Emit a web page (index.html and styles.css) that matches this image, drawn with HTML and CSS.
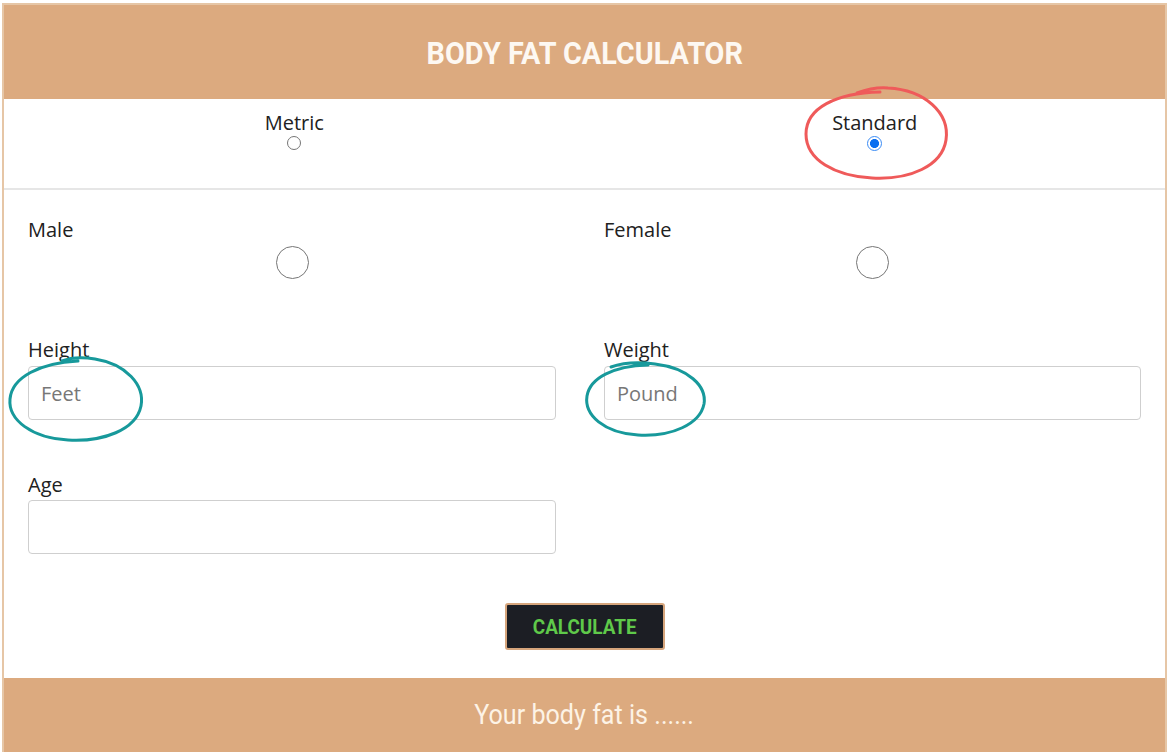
FILE: index.html
```html
<!DOCTYPE html>
<html lang="en">
<head>
<meta charset="utf-8">
<title>Body Fat Calculator</title>
<link rel="stylesheet" href="styles.css">
</head>
<body>
<div class="frame">
  <header class="header"><h1 class="title"><span>BODY FAT CALCULATOR</span></h1></header>

  <div class="units">
    <label class="unit">
      <span class="unit-label">Metric</span>
      <input type="radio" name="unit" class="radio-sm">
    </label>
    <label class="unit">
      <span class="unit-label">Standard</span>
      <input type="radio" name="unit" class="radio-sm" checked>
    </label>
  </div>

  <form class="form">
    <div class="field gender">
      <span class="label">Male</span>
      <input type="radio" name="sex" class="radio-lg">
    </div>
    <div class="field gender">
      <span class="label">Female</span>
      <input type="radio" name="sex" class="radio-lg">
    </div>

    <div class="field measure">
      <span class="label">Height</span>
      <input type="text" class="input" placeholder="Feet">
    </div>
    <div class="field measure">
      <span class="label">Weight</span>
      <input type="text" class="input" placeholder="Pound">
    </div>

    <div class="field age">
      <span class="label">Age</span>
      <input type="text" class="input">
    </div>

    <div class="actions">
      <button type="button" class="btn"><span>CALCULATE</span></button>
    </div>
  </form>

  <footer class="result"><span>Your body fat is ......</span></footer>

  <svg class="marks" width="1169" height="754" viewBox="0 0 1169 754" aria-hidden="true">
    <path class="mark-red" d="M857 93 C868 89 876 87 888 88 C925 90 950 113 946 140 C942 166 910 180 872 178 C835 176 806 160 806 134 C806 108 836 93 880 92"/>
    <path class="mark-teal" d="M62 361 C72 357 84 357 95 359 C126 364 145 385 141 406 C136 430 103 442 68 440 C32 438 8 420 10 399 C12 377 40 363 78 361"/>
    <path class="mark-teal" d="M611 367 C625 362 640 362 655 364 C688 368 707 386 704 404 C700 424 672 437 638 435 C604 433 584 415 587 396 C590 378 613 366 648 365"/>
  </svg>
</div>
</body>
</html>
```

FILE: styles.css
```css
* { box-sizing: border-box; }

html, body {
  margin: 0;
  padding: 0;
  background: #fff;
}

body {
  font-family: "Open Sans", "Liberation Sans", sans-serif;
  color: #212121;
}

.frame {
  position: relative;
  margin: 3px 2px 0 2px;
  border: 2px solid #e6c6a6;
  border-bottom: none;
  height: 749px;
  display: flex;
  flex-direction: column;
}

.header {
  background: #dcaa7f;
  height: 94px;
  display: flex;
  align-items: center;
  justify-content: center;
}

.title {
  margin: 0;
  font-family: Roboto, "Liberation Sans", sans-serif;
  font-weight: 700;
  font-size: 32px;
  color: #fdf8f2;
  line-height: 1;
}

.title span {
  display: inline-block;
  transform: scaleX(0.9);
  padding-top: 2px;
}

.units {
  display: grid;
  grid-template-columns: 1fr 1fr;
  height: 91px;
  border-bottom: 2px solid #e6e6e6;
  padding-top: 12px;
}

.unit {
  display: flex;
  flex-direction: column;
  align-items: center;
}

.unit-label {
  font-size: 20px;
  line-height: 24px;
}

.radio-sm, .radio-lg {
  appearance: none;
  -webkit-appearance: none;
  margin: 0;
  border-radius: 50%;
  border: 1px solid #767676;
  background: #fff;
}

.radio-sm {
  width: 14px;
  height: 14px;
  margin-top: 1px;
}

.radio-sm:checked {
  width: 15px;
  height: 15px;
  border: 1.5px solid #3b8cf5;
  background: radial-gradient(circle, #0a6ff0 0 4.2px, #fff 4.8px);
}

.radio-lg {
  width: 33px;
  height: 33px;
  margin-top: 4px;
  align-self: center;
}

.form {
  display: grid;
  grid-template-columns: 528px 537px;
  column-gap: 48px;
  padding: 0 0 0 24px;
}

.field {
  display: flex;
  flex-direction: column;
}

.label {
  font-size: 20px;
  line-height: 24px;
}

.gender {
  padding-top: 28px;
}

.measure {
  padding-top: 59px;
}

.age {
  padding-top: 53px;
}

.input {
  margin-top: 4px;
  height: 54px;
  border: 1px solid #cfcfcf;
  border-radius: 4px;
  padding: 0 12px;
  font-family: "Open Sans", "Liberation Sans", sans-serif;
  font-size: 20px;
  color: #333;
  background: #fff;
}

.input::placeholder {
  color: #777;
}

.age .input {
  margin-top: 3px;
}

.actions {
  grid-column: 1 / -1;
  display: flex;
  justify-content: center;
  padding-top: 49px;
}

.btn {
  width: 160px;
  height: 47px;
  background: #1c1e24;
  border: 2px solid #d6a57c;
  border-radius: 3px;
  color: #5fc94a;
  font-family: Roboto, "Liberation Sans", sans-serif;
  font-weight: 700;
  font-size: 21px;
  padding: 0;
}

.btn span {
  display: inline-block;
  transform: scaleX(0.9);
}

.result {
  margin-top: auto;
  height: 74px;
  background: #dcaa7f;
  display: flex;
  align-items: center;
  justify-content: center;
  color: #fdf3e6;
  font-family: Roboto, "Liberation Sans", sans-serif;
  font-size: 27px;
}

.result span {
  display: inline-block;
  transform: scaleX(0.93);
}

.marks {
  position: absolute;
  left: -4px;
  top: -5px;
  pointer-events: none;
}

.marks path {
  fill: none;
  stroke-width: 3px;
  stroke-linecap: round;
  stroke-linejoin: round;
}

.mark-red { stroke: #ef5a5a; }
.mark-teal { stroke: #17999b; }
```
